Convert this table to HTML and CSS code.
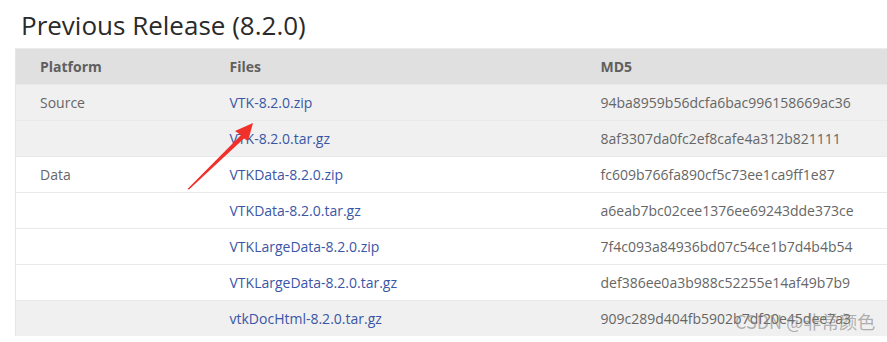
FILE: index.html
```html
<!DOCTYPE html>
<html lang="en">
<head>
<meta charset="utf-8">
<title>Previous Release (8.2.0)</title>
<link rel="stylesheet" href="styles.css">
</head>
<body>
<div class="page">
  <h2 class="title">Previous Release (8.2.0)</h2>
  <table class="downloads">
    <colgroup>
      <col class="c-platform">
      <col class="c-files">
      <col class="c-md5">
    </colgroup>
    <thead>
      <tr class="head"><th>Platform</th><th>Files</th><th>MD5</th></tr>
    </thead>
    <tbody>
      <tr class="alt"><td>Source</td><td><a href="#">VTK-8.2.0.zip</a></td><td>94ba8959b56dcfa6bac996158669ac36</td></tr>
      <tr class="alt"><td></td><td><a href="#">VTK-8.2.0.tar.gz</a></td><td>8af3307da0fc2ef8cafe4a312b821111</td></tr>
      <tr><td>Data</td><td><a href="#">VTKData-8.2.0.zip</a></td><td>fc609b766fa890cf5c73ee1ca9ff1e87</td></tr>
      <tr><td></td><td><a href="#">VTKData-8.2.0.tar.gz</a></td><td>a6eab7bc02cee1376ee69243dde373ce</td></tr>
      <tr><td></td><td><a href="#">VTKLargeData-8.2.0.zip</a></td><td>7f4c093a84936bd07c54ce1b7d4b4b54</td></tr>
      <tr><td></td><td><a href="#">VTKLargeData-8.2.0.tar.gz</a></td><td>def386ee0a3b988c52255e14af49b7b9</td></tr>
      <tr class="alt"><td></td><td><a href="#">vtkDocHtml-8.2.0.tar.gz</a></td><td>909c289d404fb5902b7df20e45dee7a3</td></tr>
    </tbody>
  </table>
  <svg class="arrow" width="887" height="342" viewBox="0 0 887 342" aria-hidden="true">
    <polygon points="253,123 235,131 241,135 187.5,189 189,189.5 244,138.5 248,141" fill="#f0302b"/>
  </svg>
  <div class="watermark">CSDN @非常颜色</div>
</div>
</body>
</html>
```
FILE: styles.css
```css
html, body {
  margin: 0;
  padding: 0;
  background: #ffffff;
  overflow: hidden;
}
.page {
  position: relative;
  width: 887px;
  height: 342px;
  padding-top: 8px;
  box-sizing: border-box;
  font-family: "Open Sans", "Noto Sans", sans-serif;
}
.title {
  margin: 0 0 6px 21px;
  font-size: 26px;
  line-height: 34px;
  font-weight: 400;
  color: #2a2a2a;
}
.downloads {
  margin-left: 15px;
  width: 872px;
  border-collapse: collapse;
  table-layout: fixed;
  font-size: 14px;
  line-height: 19px;
  color: #666666;
  border-left: 1px solid #e6e6e6;
}
.c-platform { width: 189px; }
.c-files { width: 371px; }
.c-md5 { width: 312px; }
.downloads th,
.downloads td {
  padding: 8px 25px;
  border-top: 1px solid #e9e9e9;
  text-align: left;
  white-space: nowrap;
  overflow: visible;
}
.downloads th:first-child,
.downloads td:first-child {
  padding-left: 24px;
}
.downloads th {
  font-weight: 700;
  color: #5f5f5f;
}
.head {
  background: #e0e0e0;
}
.head th {
  border-top-color: #ececec;
}
.alt {
  background: #f0f0f0;
}
.downloads a {
  color: #3a56a6;
  text-decoration: none;
}
.arrow {
  position: absolute;
  left: 0;
  top: 0;
  pointer-events: none;
}
.watermark {
  position: absolute;
  left: 735px;
  top: 308px;
  font-family: "Noto Sans CJK SC", "Noto Sans", sans-serif;
  font-size: 18px;
  line-height: 26px;
  color: rgba(130, 130, 130, 0.6);
  white-space: nowrap;
}
```
